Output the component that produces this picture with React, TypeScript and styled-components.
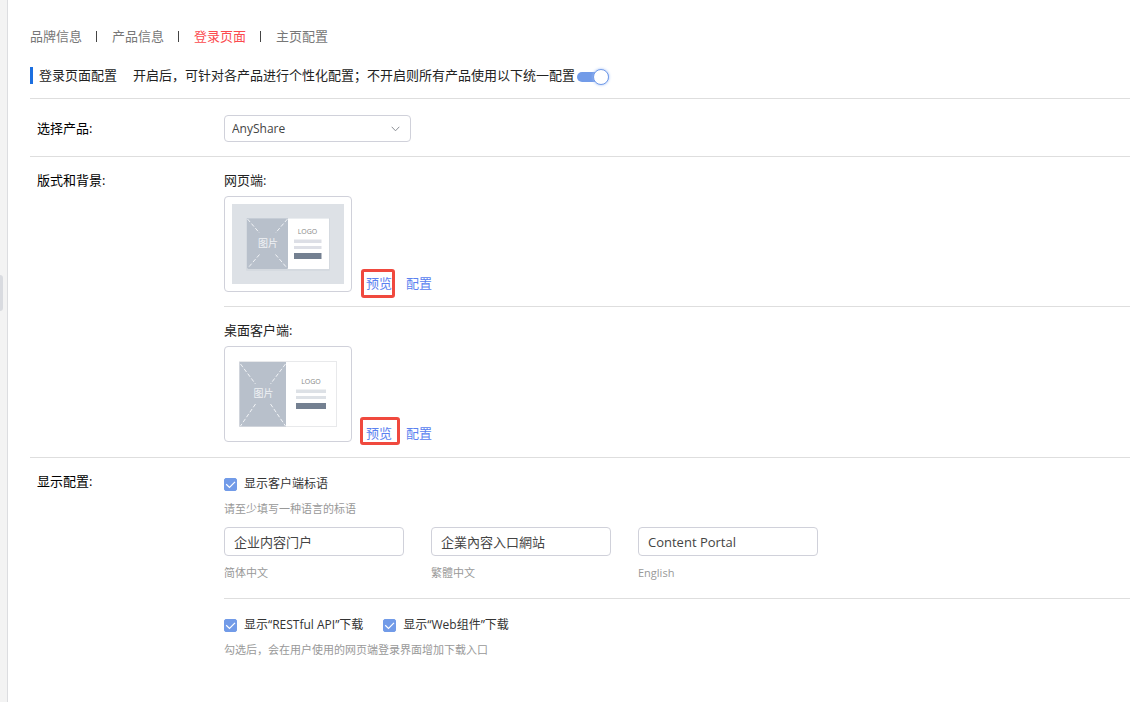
import React from "react";
import styled, { createGlobalStyle, css } from "styled-components";

const GlobalStyle = createGlobalStyle`
  *, *::before, *::after { box-sizing: border-box; }
  body {
    margin: 0;
    background: #fff;
    color: #222;
    font-family: "Open Sans", "Noto Sans CJK SC", sans-serif;
    font-size: 13px;
    line-height: 20px;
  }
`;

const Page = styled.div`
  display: flex;
  min-height: 100vh;
`;

const Rail = styled.aside`
  display: flex;
  align-items: center;
  width: 8px;
  flex: none;
  padding-bottom: 116px;
  background: #f3f3f3;
  border-right: 1px solid #dcdde0;
`;

const RailHandle = styled.button`
  width: 3px;
  height: 36px;
  padding: 0;
  border: 0;
  border-radius: 0 3px 3px 0;
  background: #d9dbe0;
`;

const Main = styled.main`
  flex: 1;
  min-width: 0;
  padding: 26px 0 32px 22px;
`;

const Nav = styled.nav`
  display: flex;
  align-items: center;
  margin-bottom: 19px;
`;

const NavLink = styled.a<{ $active?: boolean }>`
  display: flex;
  align-items: center;
  color: ${(p) => (p.$active ? "#fb4a4e" : "#777")};
  text-decoration: none;

  &:not(:first-child)::before {
    content: "";
    width: 1px;
    height: 11px;
    margin: 0 15px 0 14px;
    background: #444;
  }
`;

const TitleBar = styled.header`
  display: flex;
  align-items: center;
  gap: 16px;
  padding-bottom: 13px;
`;

const Title = styled.h1`
  display: flex;
  align-items: center;
  gap: 6px;
  margin: 0;
  font-size: 13px;
  font-weight: 400;

  &::before {
    content: "";
    width: 3px;
    height: 17px;
    background: #1c6fe0;
  }
`;

const SwitchLabel = styled.label`
  display: flex;
  align-items: center;
  gap: 2px;
`;

const Switch = styled.input`
  appearance: none;
  display: flex;
  align-items: center;
  justify-content: flex-end;
  width: 32px;
  height: 10px;
  margin: 3px 0 0;
  border-radius: 5px;
  background: #729be8;

  &::before {
    content: "";
    flex: none;
    width: 16px;
    height: 16px;
    border: 1px solid #729be8;
    border-radius: 50%;
    background: #fff;
    box-shadow: 0 0 3px #9dbcf5;
  }

  &:not(:checked) {
    justify-content: flex-start;
    background: #c9ccd3;
  }
`;

const Section = styled.section`
  display: grid;
  grid-template-columns: 187px minmax(0, 1fr);
  padding-left: 7px;
  border-top: 1px solid #dedede;
`;

const SectionLabel = styled.div<{ $top: number }>`
  padding-top: ${(p) => p.$top}px;
  color: #000;
`;

const Block = styled.div<{ $top: number; $bottom: number }>`
  padding: ${(p) => p.$top}px 0 ${(p) => p.$bottom}px;
`;

const Blocks = styled.div`
  & > ${Block}:not(:first-child) {
    border-top: 1px solid #dedede;
  }
`;

const SelectBox = styled.div`
  display: grid;
  align-items: center;
  width: 187px;

  & > * {
    grid-area: 1 / 1;
  }

  svg {
    justify-self: end;
    margin-right: 11px;
    pointer-events: none;
  }
`;

const field = css`
  width: 100%;
  border: 1px solid #d0d1da;
  border-radius: 4px;
  background: #fff;
  color: #444;
  font-family: inherit;
`;

const Select = styled.select`
  ${field}
  appearance: none;
  height: 27px;
  padding: 0 24px 0 7px;
  font-size: 12px;
`;

const LayoutRow = styled.div`
  display: flex;
  align-items: flex-end;
  margin-top: 6px;
`;

const Thumb = styled.div`
  width: 128px;
  height: 96px;
  padding: 7px;
  border: 1px solid #d0d1da;
  border-radius: 4px;

  svg {
    display: block;
  }
`;

const Actions = styled.div`
  display: flex;
  gap: 14px;
  margin: 0 0 -1px 14px;
`;

const TextButton = styled.button`
  position: relative;
  padding: 0;
  border: 0;
  background: none;
  color: #5b82f0;
  font: inherit;
`;

const Marker = styled.span<{ $wide?: boolean }>`
  position: absolute;
  top: ${(p) => (p.$wide ? -6 : -4)}px;
  left: ${(p) => (p.$wide ? -6 : -5)}px;
  width: ${(p) => (p.$wide ? 40 : 34)}px;
  height: ${(p) => (p.$wide ? 28 : 29)}px;
  border: 3px solid #f0493e;
  border-radius: 3px;
`;

const CheckGroup = styled.div`
  display: flex;
  gap: 20px;
`;

const CheckLabel = styled.label`
  display: flex;
  align-items: center;
  gap: 7px;
  color: #333;
  font-size: 12px;
`;

const CheckBox = styled.span`
  display: grid;
  width: 13px;
  height: 13px;

  & > * {
    grid-area: 1 / 1;
  }

  input {
    appearance: none;
    width: 13px;
    height: 13px;
    margin: 0;
    border: 1px solid #d0d1da;
    border-radius: 2px;
  }

  input:checked {
    border-color: #729be8;
    background: #729be8;
  }

  svg {
    pointer-events: none;
  }
`;

const Hint = styled.p`
  margin: 5px 0 0;
  color: #999;
  font-size: 11px;
`;

const Slogans = styled.div`
  display: flex;
  flex-wrap: wrap;
  gap: 27px;
  margin-top: 8px;
`;

const Slogan = styled.div`
  display: flex;
  flex-direction: column-reverse;
  gap: 7px;
  width: 180px;

  label {
    color: #999;
    font-size: 11px;
  }
`;

const TextInput = styled.input`
  ${field}
  height: 29px;
  padding: 0 9px;
  font-size: 13px;
`;

const WebLayout = () => (
  <svg width="112" height="80" viewBox="0 0 112 80" aria-hidden="true">
    <rect width="112" height="80" fill="#dde1e6" />
    <rect x="14" y="14" width="84" height="53" rx="1" fill="#d5dae0" />
    <rect x="15" y="14.5" width="41" height="50.5" fill="#b8c0cb" />
    <rect x="56" y="14.5" width="41" height="50.5" fill="#fff" />
    <path
      d="M15.5 15l12 14M55.5 15l-12 14M27.5 50.5l-12 14M43.5 50.5l12 14"
      stroke="#f2f4f7"
      strokeDasharray="4 2"
    />
    <text x="36" y="43" fontSize="10" textAnchor="middle" fill="#f0f2f5">图片</text>
    <text x="75.5" y="30" fontSize="7" textAnchor="middle" fill="#888">LOGO</text>
    <path d="M62 35.5h27.5v3.5H62zM62 42h27.5v3H62z" fill="#dddfe6" />
    <path d="M62 49h27.5v6H62z" fill="#748091" />
  </svg>
);

const DesktopLayout = () => (
  <svg width="112" height="80" viewBox="0 0 112 80" aria-hidden="true">
    <rect x="7.5" y="7.5" width="97" height="65" fill="#fff" stroke="#e8e9eb" />
    <rect x="7.5" y="8" width="46.5" height="64.5" fill="#b8c0cb" />
    <path
      d="M8.5 10l15 20M53.5 10l-15 20M23.5 50l-15 22M38.5 50l15 22"
      stroke="#f2f4f7"
      strokeDasharray="4 2"
    />
    <text x="31.5" y="43" fontSize="10" textAnchor="middle" fill="#f0f2f5">图片</text>
    <text x="79" y="30" fontSize="7" textAnchor="middle" fill="#888">LOGO</text>
    <path d="M64 35.5h30v3.5H64zM64 42h30v3H64z" fill="#dde1e6" />
    <path d="M64 49h30v6H64z" fill="#748091" />
  </svg>
);

function Check({ children }: { children: React.ReactNode }) {
  return (
    <CheckLabel>
      <CheckBox>
        <input type="checkbox" defaultChecked />
        <svg width="13" height="13" viewBox="0 0 13 13" fill="none" stroke="#fff" strokeWidth="1.2" aria-hidden="true">
          <path d="M2.2 6.2l3.3 3.2L11 3.8" />
        </svg>
      </CheckBox>
      <span>{children}</span>
    </CheckLabel>
  );
}

const tabs = ["品牌信息", "产品信息", "登录页面", "主页配置"];

const layouts = [
  { name: "网页端:", Picture: WebLayout, wide: false, bottom: 14 },
  { name: "桌面客户端:", Picture: DesktopLayout, wide: true, bottom: 15 },
];

const slogans = [
  { id: "zh-cn", label: "简体中文", value: "企业内容门户" },
  { id: "zh-tw", label: "繁體中文", value: "企業內容入口網站" },
  { id: "en-us", label: "English", value: "Content Portal" },
];

export default function App() {
  return (
    <>
      <GlobalStyle />
      <Page>
        <Rail>
          <RailHandle type="button" aria-label="展开侧栏" />
        </Rail>
        <Main>
          <Nav>
            {tabs.map((tab) => (
              <NavLink key={tab} href="#" $active={tab === "登录页面"}>
                {tab}
              </NavLink>
            ))}
          </Nav>

          <TitleBar>
            <Title>登录页面配置</Title>
            <SwitchLabel>
              开启后，可针对各产品进行个性化配置；不开启则所有产品使用以下统一配置
              <Switch type="checkbox" role="switch" defaultChecked />
            </SwitchLabel>
          </TitleBar>

          <Section>
            <SectionLabel $top={19}>
              <label htmlFor="product">选择产品:</label>
            </SectionLabel>
            <Block $top={16} $bottom={14}>
              <SelectBox>
                <Select id="product" defaultValue="AnyShare">
                  <option>AnyShare</option>
                </Select>
                <svg width="9" height="6" viewBox="0 0 9 6" fill="none" stroke="#8c8f96" aria-hidden="true">
                  <path d="M0.7 0.8l3.8 4 3.8-4" />
                </svg>
              </SelectBox>
            </Block>
          </Section>

          <Section>
            <SectionLabel $top={13}>版式和背景:</SectionLabel>
            <Blocks>
              {layouts.map(({ name, Picture, wide, bottom }) => (
                <Block key={name} $top={13} $bottom={bottom}>
                  <div>{name}</div>
                  <LayoutRow>
                    <Thumb>
                      <Picture />
                    </Thumb>
                    <Actions>
                      <TextButton type="button">
                        预览
                        <Marker $wide={wide} />
                      </TextButton>
                      <TextButton type="button">配置</TextButton>
                    </Actions>
                  </LayoutRow>
                </Block>
              ))}
            </Blocks>
          </Section>

          <Section>
            <SectionLabel $top={13}>显示配置:</SectionLabel>
            <Blocks>
              <Block $top={16} $bottom={15}>
                <CheckGroup>
                  <Check>显示客户端标语</Check>
                </CheckGroup>
                <Hint>请至少填写一种语言的标语</Hint>
                <Slogans>
                  {slogans.map(({ id, label, value }) => (
                    <Slogan key={id}>
                      <label htmlFor={id}>{label}</label>
                      <TextInput id={id} defaultValue={value} />
                    </Slogan>
                  ))}
                </Slogans>
              </Block>
              <Block $top={16} $bottom={0}>
                <CheckGroup>
                  <Check>显示“RESTful API”下载</Check>
                  <Check>显示“Web组件”下载</Check>
                </CheckGroup>
                <Hint>勾选后，会在用户使用的网页端登录界面增加下载入口</Hint>
              </Block>
            </Blocks>
          </Section>
        </Main>
      </Page>
    </>
  );
}
